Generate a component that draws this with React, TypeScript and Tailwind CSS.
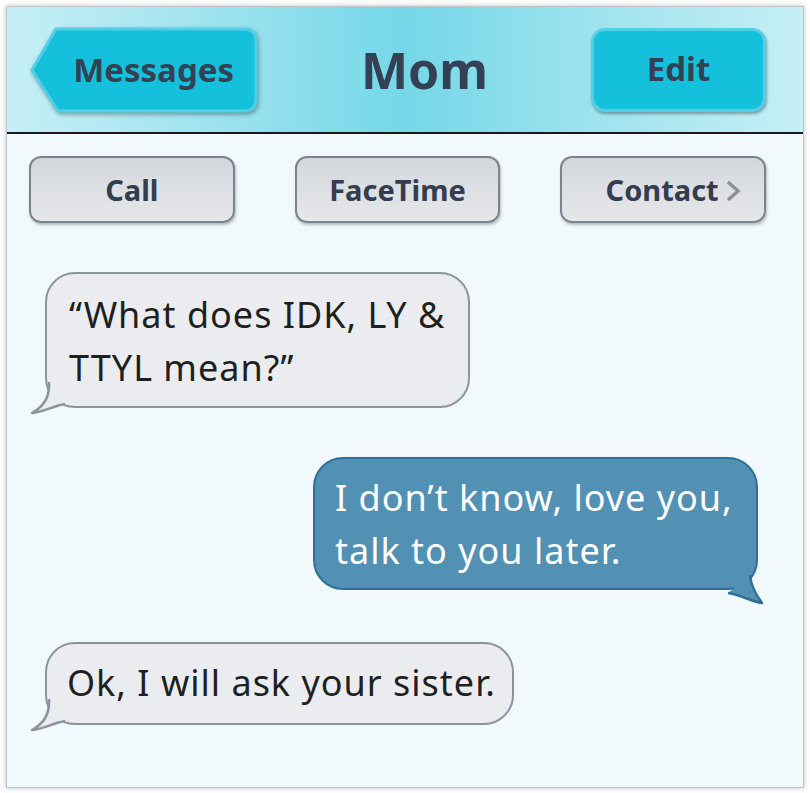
const font = { fontFamily: '"Noto Sans", "Open Sans", sans-serif' };

function BackButton() {
  return (
    <div className="relative w-[228px] h-[86px] flex items-center justify-end pr-[24px]">
      <svg
        className="absolute inset-0 drop-shadow-[1px_2px_2px_rgba(0,0,0,0.35)]"
        width="228"
        height="86"
        viewBox="0 0 228 86"
      >
        <path
          d="M26 2 H214 Q226 2 226 14 V72 Q226 84 214 84 H28 L2 43 Z"
          fill="#15c0dc"
          stroke="#52cfe5"
          strokeWidth="3"
          strokeLinejoin="round"
        />
      </svg>
      <span className="relative text-[33px] font-bold text-[#344054] leading-none">Messages</span>
    </div>
  );
}

function ActionButton({ label, chevron }: { label: string; chevron?: boolean }) {
  return (
    <div className="h-[67px] rounded-[12px] border-2 border-[#7b838d] bg-gradient-to-b from-[#d3d7dc] to-[#e6e7ea] shadow-[1px_2px_3px_rgba(0,0,0,0.25)] flex items-center justify-center">
      <span className={`text-[29px] font-bold text-[#333d4f] leading-none ${chevron ? 'ml-[20px]' : ''}`}>{label}</span>
      {chevron && (
        <svg className="ml-[6px] mt-[2px]" width="16" height="22" viewBox="0 0 16 22">
          <polyline points="3,2 13,11 3,20" fill="none" stroke="#8a9099" strokeWidth="3.4" strokeLinejoin="miter" />
        </svg>
      )}
    </div>
  );
}

function TailLeft({ fill, stroke }: { fill: string; stroke: string }) {
  return (
    <svg className="absolute left-[-18px] bottom-[-10px]" width="50" height="50" viewBox="0 0 50 50">
      <path
        d="M20 16 C21 30 16 40 3 47 C15 46 24 40 36 38"
        fill={fill}
        stroke={stroke}
        strokeWidth="2.5"
        strokeLinejoin="round"
      />
    </svg>
  );
}

function TailRight({ fill, stroke }: { fill: string; stroke: string }) {
  return (
    <svg className="absolute right-[-8px] bottom-[-17px]" width="50" height="50" viewBox="0 0 50 50">
      <path
        d="M36 20 C37 32 42 40 48 48 C36 46 27 40 14 38"
        fill={fill}
        stroke={stroke}
        strokeWidth="2.5"
        strokeLinejoin="round"
      />
    </svg>
  );
}

export default function App() {
  return (
    <div className="w-[810px] h-[793px] bg-white p-[6px]" style={font}>
      <div className="w-[798px] h-[782px] border border-[#c4c4c4] shadow-[0_0_5px_rgba(0,0,0,0.25)] bg-[#f1f9fc] flex flex-col">
        <header className="h-[127px] shrink-0 border-b-2 border-[#1a1a1a] bg-gradient-to-r from-[#c6eff6] via-[#74d7e8] to-[#c6eff6] flex items-center justify-between pl-[23px] pr-[37px]">
          <BackButton />
          <h1 className="text-[50px] font-bold text-[#344054] leading-none">Mom</h1>
          <div className="w-[175px] h-[84px] rounded-[14px] bg-[#15c0dc] border-[3px] border-[#52cfe5] shadow-[1px_2px_3px_rgba(0,0,0,0.35)] flex items-center justify-center">
            <span className="text-[33px] font-bold text-[#344054] leading-none mb-[3px]">Edit</span>
          </div>
        </header>

        <div className="grid grid-cols-3 gap-x-[60px] pl-[22px] pr-[37px] pt-[22px]">
          <ActionButton label="Call" />
          <ActionButton label="FaceTime" />
          <ActionButton label="Contact" chevron />
        </div>

        <div className="flex flex-col pt-[49px] pl-[38px] pr-[45px] text-[36px] tracking-[1px] leading-[53px] whitespace-nowrap">
          <div className="relative self-start w-[425px] h-[136px] rounded-[30px] border-[2.5px] border-[#8a949f] bg-[#ebecef] px-[22px] py-[14px] text-[#1f1f1f]">
            <TailLeft fill="#ebecef" stroke="#8a949f" />
            <p className="relative">
              “What does IDK, LY &amp;
              <br />
              TTYL mean?”
            </p>
          </div>

          <div className="relative self-end mt-[49px] w-[445px] h-[133px] rounded-[30px] border-[2.5px] border-[#2f6f98] bg-[#5290b4] px-[20px] py-[12px] text-white">
            <TailRight fill="#5290b4" stroke="#2f6f98" />
            <p className="relative">
              I don’t know, love you,
              <br />
              talk to you later.
            </p>
          </div>

          <div className="relative self-start mt-[52px] w-[469px] h-[83px] rounded-[30px] border-[2.5px] border-[#8a949f] bg-[#ebecef] px-[20px] py-[12px] text-[#1f1f1f]">
            <TailLeft fill="#ebecef" stroke="#8a949f" />
            <p className="relative">Ok, I will ask your sister.</p>
          </div>
        </div>
      </div>
    </div>
  );
}
